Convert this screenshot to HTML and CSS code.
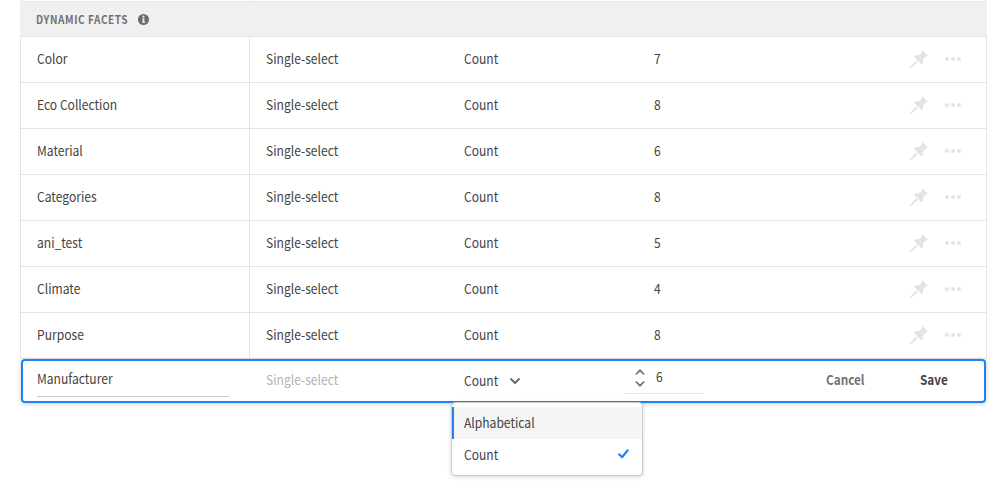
FILE: index.html
```html
<!DOCTYPE html>
<html lang="en">
<head>
<meta charset="utf-8">
<title>Facets</title>
<link rel="stylesheet" href="styles.css">
</head>
<body>
<svg class="sprite" aria-hidden="true">
  <symbol id="pin" viewBox="0 0 18 18"><path d="M12.3 0 L18 5.7 L16 6.4 L12.8 9.6 L13.2 12.2 L11.6 14.4 L3.8 6.6 L6 5 L8.6 5.4 L11.8 2.2 Z"/><path d="M6.3 10.3 L7.9 11.9 L1.1 18 L0 18 L0 17 Z"/></symbol>
  <symbol id="more" viewBox="0 0 16 4"><circle cx="2" cy="2" r="2"/><circle cx="8" cy="2" r="2"/><circle cx="14" cy="2" r="2"/></symbol>
</svg>
<main class="table">
  <div class="row row-prev"><div class="name"></div></div>
  <div class="group">
    <span class="group-title">DYNAMIC FACETS</span>
    <svg class="info" viewBox="0 0 11 11"><circle cx="5.5" cy="5.5" r="5.5"/><circle class="info-mark" cx="5.5" cy="2.7" r="1.1"/><path class="info-mark" d="M4 4.5h2.4v3.2H7.2v1.1H3.9V7.7h.8V5.5H4z"/></svg>
  </div>
  <div class="row"><div class="name"><span class="text">Color</span></div><div class="type"><span class="text">Single-select</span></div><div class="sort"><span class="text">Count</span></div><div class="max"><span class="text">7</span></div><div class="tools"><svg class="pin"><use href="#pin"/></svg><svg class="more"><use href="#more"/></svg></div></div>
  <div class="row"><div class="name"><span class="text">Eco Collection</span></div><div class="type"><span class="text">Single-select</span></div><div class="sort"><span class="text">Count</span></div><div class="max"><span class="text">8</span></div><div class="tools"><svg class="pin"><use href="#pin"/></svg><svg class="more"><use href="#more"/></svg></div></div>
  <div class="row"><div class="name"><span class="text">Material</span></div><div class="type"><span class="text">Single-select</span></div><div class="sort"><span class="text">Count</span></div><div class="max"><span class="text">6</span></div><div class="tools"><svg class="pin"><use href="#pin"/></svg><svg class="more"><use href="#more"/></svg></div></div>
  <div class="row"><div class="name"><span class="text">Categories</span></div><div class="type"><span class="text">Single-select</span></div><div class="sort"><span class="text">Count</span></div><div class="max"><span class="text">8</span></div><div class="tools"><svg class="pin"><use href="#pin"/></svg><svg class="more"><use href="#more"/></svg></div></div>
  <div class="row"><div class="name"><span class="text">ani_test</span></div><div class="type"><span class="text">Single-select</span></div><div class="sort"><span class="text">Count</span></div><div class="max"><span class="text">5</span></div><div class="tools"><svg class="pin"><use href="#pin"/></svg><svg class="more"><use href="#more"/></svg></div></div>
  <div class="row"><div class="name"><span class="text">Climate</span></div><div class="type"><span class="text">Single-select</span></div><div class="sort"><span class="text">Count</span></div><div class="max"><span class="text">4</span></div><div class="tools"><svg class="pin"><use href="#pin"/></svg><svg class="more"><use href="#more"/></svg></div></div>
  <div class="row"><div class="name"><span class="text">Purpose</span></div><div class="type"><span class="text">Single-select</span></div><div class="sort"><span class="text">Count</span></div><div class="max"><span class="text">8</span></div><div class="tools"><svg class="pin"><use href="#pin"/></svg><svg class="more"><use href="#more"/></svg></div></div>
  <div class="edit">
    <div class="edit-name"><div class="field"><span class="text">Manufacturer</span></div></div>
    <div class="edit-type"><span class="text">Single-select</span></div>
    <div class="edit-sort">
      <span class="text sort-value">Count</span>
      <svg class="chevron" viewBox="0 0 10 6"><path d="M1 1l4 4 4-4"/></svg>
      <div class="menu">
        <div class="option option-active"><span class="text">Alphabetical</span></div>
        <div class="option"><span class="text">Count</span><svg class="check" viewBox="0 0 11 10"><path d="M1.2 5.4l2.9 2.8L9.7 1.3"/></svg></div>
      </div>
    </div>
    <div class="edit-max">
      <svg class="stepper" viewBox="0 0 10 18"><path d="M1.3 5l3.7-3.7L8.7 5M1.3 13l3.7 3.7L8.7 13"/></svg>
      <span class="text">6</span>
    </div>
    <div class="actions"><span class="text cancel">Cancel</span><span class="text save">Save</span></div>
  </div>
</main>
</body>
</html>
```
FILE: styles.css
```css
* { box-sizing: border-box; }
body {
  margin: 0;
  height: 483px;
  overflow: hidden;
  background: #fff;
  color: #434343;
  font: 400 13.5px/20px "Noto Sans CJK SC", "Open Sans", sans-serif;
}
.sprite { position: absolute; width: 0; height: 0; }
/* condensed labels */
.text {
  display: inline-block;
  transform: scaleX(0.895);
  transform-origin: left center;
}
.table { width: 967px; margin-left: 20px; }
.row {
  display: grid;
  grid-template-columns: 229px 198px 190px 90px 1fr;
  height: 46px;
  border: 1px solid #e4e4e4;
  border-top: 0;
  line-height: 43px;
}
.row-prev { height: 2px; }
.name { padding-left: 16px; border-right: 1px solid #e4e4e4; }
.type { padding-left: 15.5px; }
.sort { padding-left: 16px; }
.max { padding-left: 16px; }
.tools {
  display: flex;
  align-items: center;
  justify-content: flex-end;
  gap: 17px;
  padding: 0 25px 1px 0;
  fill: #e4e4e4;
}
.pin { width: 18px; height: 18px; }
.more { width: 16px; height: 4px; }
.group {
  display: flex;
  align-items: center;
  height: 35px;
  padding-left: 16px;
  background: #f0f0f0;
  border-bottom: 1px solid #e4e4e4;
  border-radius: 3px 3px 0 0;
}
.group-title {
  width: 102px;
  font-size: 11px;
  font-weight: 700;
  letter-spacing: 0.65px;
  color: #707070;
  white-space: nowrap;
  transform: scaleX(0.91);
  transform-origin: left center;
}
.info { width: 11px; height: 11px; fill: #6a6a6a; }
.info-mark { fill: #f0f0f0; }
.edit {
  display: grid;
  grid-template-columns: 226px 198px 177px 1fr auto;
  width: 965px;
  height: 44px;
  margin-left: 1px;
  border: 2px solid #1785f8;
  border-radius: 4px;
  box-shadow: 0 1px 4px rgba(0, 0, 0, 0.2);
  line-height: 37px;
}
.edit-name { padding-left: 14px; }
.field {
  width: 192px;
  height: 36px;
  line-height: 35px;
  border-bottom: 1px solid #cacaca;
}
.edit-type { padding-left: 16.5px; color: #b3b3b3; }
.edit-sort {
  position: relative;
  display: flex;
  align-items: center;
  padding-left: 17px;
}
.sort-value { width: 46px; padding-bottom: 2px; }
.chevron { width: 10px; height: 6px; overflow: visible; }
.chevron path { fill: none; stroke: #6e6e6e; stroke-width: 2; stroke-linecap: round; }
.menu {
  position: absolute;
  top: 41px;
  left: 4px;
  width: 192px;
  height: 74px;
  padding: 4px 0;
  background: #fff;
  border: 1px solid #cacaca;
  border-radius: 4px;
  box-shadow: 0 1px 4px rgba(0, 0, 0, 0.16);
  line-height: 30px;
}
.option {
  display: flex;
  align-items: flex-start;
  justify-content: space-between;
  height: 32px;
  padding: 0 13px 0 10px;
  border-left: 2px solid transparent;
}
.option-active { background: #f5f5f5; border-left-color: #2680eb; }
.check { width: 11px; height: 10px; margin-top: 10px; }
.check path { fill: none; stroke: #2680eb; stroke-width: 2.2; stroke-linecap: round; stroke-linejoin: round; }
.edit-max {
  display: flex;
  gap: 11px;
  width: 80px;
  height: 33px;
  padding-left: 11px;
  line-height: 31px;
  border-bottom: 1px solid #e4e4e4;
}
.stepper { width: 10px; height: 18px; margin-top: 8px; }
.stepper path { fill: none; stroke: #6e6e6e; stroke-width: 1.7; stroke-linecap: round; }
.actions { display: flex; font-weight: 700; }
.actions .text { transform: scaleX(0.87); }
.cancel { width: 94px; color: #747474; }
.save { width: 64px; }
```
